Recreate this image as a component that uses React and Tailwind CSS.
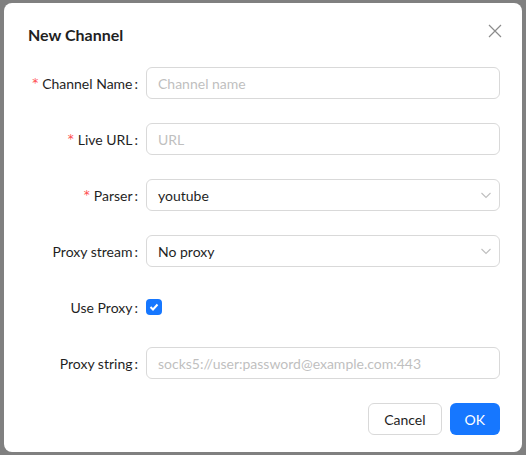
const font = { fontFamily: 'Lato, "Liberation Sans", sans-serif' };

const Chevron = () => (
  <svg width="12" height="12" viewBox="0 0 12 12" fill="none" stroke="#bfbfbf" strokeWidth="1.1">
    <path d="M1.5 4l4.5 4.5L10.5 4" />
  </svg>
);

const Label = ({ text, required }) => (
  <div className="w-[118px] shrink-0 flex items-center justify-end pr-2 text-[14px] text-[#1f1f1f] whitespace-nowrap">
    {required && <span className="text-[#ff4d4f] mr-1 text-[12px] leading-none" style={{ fontFamily: '"DejaVu Sans", sans-serif' }}>*</span>}
    <span>{text}</span>
    <span className="ml-0.5">:</span>
  </div>
);

const Input = ({ placeholder }) => (
  <div className="flex-1 h-8 rounded-md border border-[#d9d9d9] px-[11px] flex items-center text-[14px] text-[#bfbfbf]">
    {placeholder}
  </div>
);

const Select = ({ value }) => (
  <div className="flex-1 h-8 rounded-md border border-[#d9d9d9] pl-[11px] pr-[7px] flex items-center justify-between text-[14px] text-[#1f1f1f]">
    <span>{value}</span>
    <Chevron />
  </div>
);

const Row = ({ children }) => <div className="flex h-8 mb-6">{children}</div>;

export default function App() {
  return (
    <div className="w-[526px] h-[455px] bg-[#808080] pt-[3px] pl-[4px] overflow-hidden" style={font}>
      <div className="w-[518px] h-[449px] bg-white rounded-lg pl-6 pr-[22px] pt-5">
        <div className="flex items-center justify-between h-6">
          <div className="text-[16px] font-bold text-[#1f1f1f]">New Channel</div>
          <svg width="14" height="14" viewBox="0 0 14 14" stroke="#8c8c8c" strokeWidth="1.2" className="-mr-[2px] -mt-2">
            <path d="M1 1l12 12M13 1L1 13" />
          </svg>
        </div>
        <div className="mt-5">
          <Row>
            <Label text="Channel Name" required />
            <Input placeholder="Channel name" />
          </Row>
          <Row>
            <Label text="Live URL" required />
            <Input placeholder="URL" />
          </Row>
          <Row>
            <Label text="Parser" required />
            <Select value="youtube" />
          </Row>
          <Row>
            <Label text="Proxy stream" />
            <Select value="No proxy" />
          </Row>
          <Row>
            <Label text="Use Proxy" />
            <div className="flex items-center">
              <div className="w-4 h-4 rounded bg-[#1677ff] flex items-center justify-center">
                <svg width="10" height="10" viewBox="0 0 10 10" fill="none" stroke="white" strokeWidth="2">
                  <path d="M1.5 5l2.5 2.5L8.5 2.5" />
                </svg>
              </div>
            </div>
          </Row>
          <Row>
            <Label text="Proxy string" />
            <Input placeholder="socks5://user:password@example.com:443" />
          </Row>
        </div>
        <div className="flex justify-end gap-2">
          <button className="h-8 px-[15px] rounded-md border border-[#d9d9d9] text-[14px] text-[#1f1f1f] bg-white">Cancel</button>
          <button className="h-8 px-[15px] rounded-md bg-[#1677ff] text-[14px] text-white">OK</button>
        </div>
      </div>
    </div>
  );
}
